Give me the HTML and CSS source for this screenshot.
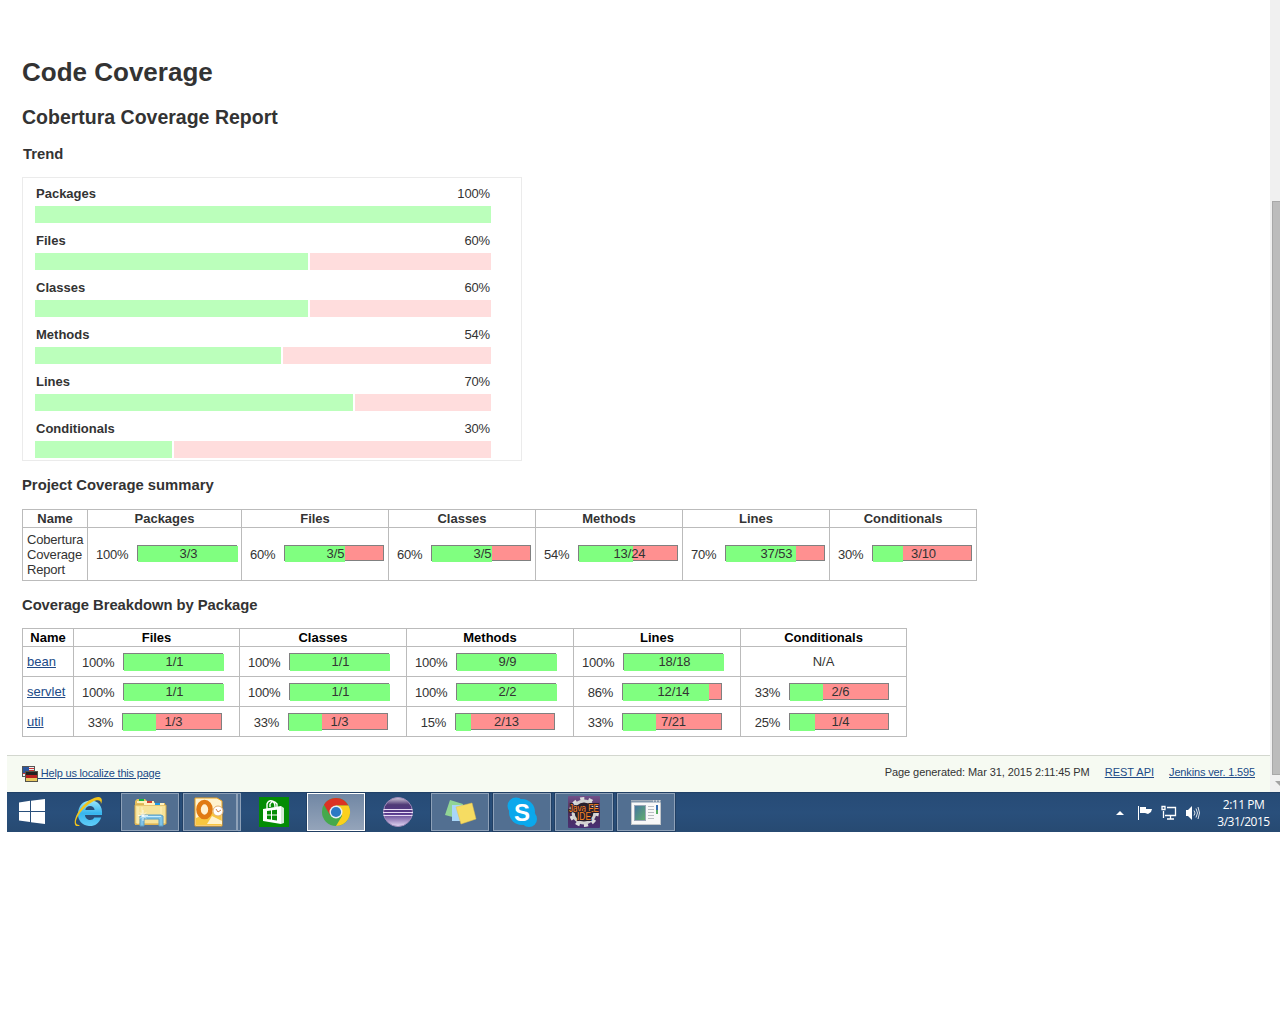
FILE: index.html
```html
<!DOCTYPE html>
<html lang="en">
<head>
<meta charset="utf-8">
<title>Code Coverage</title>
<link rel="stylesheet" href="styles.css">
</head>
<body>
<div class="screen">
  <div class="browser">
    <div class="page">
      <main class="report">
        <h1>Code Coverage</h1>
        <h2>Cobertura Coverage Report</h2>
        <h3 class="trend-title">Trend</h3>
        <section class="trend">
          <div class="metric"><div class="label"><b>Packages</b><span>100%</span></div><div class="track"><i class="hit" style="width:456px"></i></div></div>
          <div class="metric"><div class="label"><b>Files</b><span>60%</span></div><div class="track"><i class="hit" style="width:273px"></i><i class="miss"></i></div></div>
          <div class="metric"><div class="label"><b>Classes</b><span>60%</span></div><div class="track"><i class="hit" style="width:273px"></i><i class="miss"></i></div></div>
          <div class="metric"><div class="label"><b>Methods</b><span>54%</span></div><div class="track"><i class="hit" style="width:246px"></i><i class="miss"></i></div></div>
          <div class="metric"><div class="label"><b>Lines</b><span>70%</span></div><div class="track"><i class="hit" style="width:318px"></i><i class="miss"></i></div></div>
          <div class="metric"><div class="label"><b>Conditionals</b><span>30%</span></div><div class="track"><i class="hit" style="width:137px"></i><i class="miss"></i></div></div>
        </section>
        <h3 class="summary-title">Project Coverage summary</h3>
        <table class="grid summary">
          <colgroup><col class="s-name"><col class="s-pack"><col class="s-col"><col class="s-col"><col class="s-col"><col class="s-col"><col class="s-col"></colgroup>
          <tr><th>Name</th><th>Packages</th><th>Files</th><th>Classes</th><th>Methods</th><th>Lines</th><th>Conditionals</th></tr>
          <tr>
            <td class="name">Cobertura<br>Coverage<br>Report</td>
            <td><div class="ratio"><span class="pct full">100%</span><div class="bar"><i style="width:100px"></i><em>3/3</em></div></div></td>
            <td><div class="ratio"><span class="pct">60%</span><div class="bar"><i style="width:60px"></i><em>3/5</em></div></div></td>
            <td><div class="ratio"><span class="pct">60%</span><div class="bar"><i style="width:60px"></i><em>3/5</em></div></div></td>
            <td><div class="ratio"><span class="pct">54%</span><div class="bar"><i style="width:54px"></i><em>13/24</em></div></div></td>
            <td><div class="ratio"><span class="pct">70%</span><div class="bar"><i style="width:70px"></i><em>37/53</em></div></div></td>
            <td><div class="ratio"><span class="pct">30%</span><div class="bar"><i style="width:30px"></i><em>3/10</em></div></div></td>
          </tr>
        </table>
        <h3 class="packages-title">Coverage Breakdown by Package</h3>
        <table class="grid packages">
          <colgroup><col class="p-name"><col class="p-first"><col class="p-col"><col class="p-col"><col class="p-col"><col class="p-last"></colgroup>
          <tr><th>Name</th><th>Files</th><th>Classes</th><th>Methods</th><th>Lines</th><th>Conditionals</th></tr>
          <tr>
            <td class="name"><a href="#">bean</a></td>
            <td><div class="ratio"><span class="pct full">100%</span><div class="bar"><i style="width:100px"></i><em>1/1</em></div></div></td>
            <td><div class="ratio"><span class="pct full">100%</span><div class="bar"><i style="width:100px"></i><em>1/1</em></div></div></td>
            <td><div class="ratio"><span class="pct full">100%</span><div class="bar"><i style="width:100px"></i><em>9/9</em></div></div></td>
            <td><div class="ratio"><span class="pct full">100%</span><div class="bar"><i style="width:100px"></i><em>18/18</em></div></div></td>
            <td class="none">N/A</td>
          </tr>
          <tr>
            <td class="name"><a href="#">servlet</a></td>
            <td><div class="ratio"><span class="pct full">100%</span><div class="bar"><i style="width:100px"></i><em>1/1</em></div></div></td>
            <td><div class="ratio"><span class="pct full">100%</span><div class="bar"><i style="width:100px"></i><em>1/1</em></div></div></td>
            <td><div class="ratio"><span class="pct full">100%</span><div class="bar"><i style="width:100px"></i><em>2/2</em></div></div></td>
            <td><div class="ratio"><span class="pct">86%</span><div class="bar"><i style="width:86px"></i><em>12/14</em></div></div></td>
            <td><div class="ratio"><span class="pct">33%</span><div class="bar"><i style="width:33px"></i><em>2/6</em></div></div></td>
          </tr>
          <tr>
            <td class="name"><a href="#">util</a></td>
            <td><div class="ratio"><span class="pct">33%</span><div class="bar"><i style="width:33px"></i><em>1/3</em></div></div></td>
            <td><div class="ratio"><span class="pct">33%</span><div class="bar"><i style="width:33px"></i><em>1/3</em></div></div></td>
            <td><div class="ratio"><span class="pct">15%</span><div class="bar"><i style="width:15px"></i><em>2/13</em></div></div></td>
            <td><div class="ratio"><span class="pct">33%</span><div class="bar"><i style="width:33px"></i><em>7/21</em></div></div></td>
            <td><div class="ratio"><span class="pct">25%</span><div class="bar"><i style="width:25px"></i><em>1/4</em></div></div></td>
          </tr>
        </table>
      </main>
      <footer class="footer">
        <a class="localize" href="#"><svg width="16" height="16" viewBox="0 0 16 16"><rect x=".5" y=".5" width="12" height="10" fill="#eee" stroke="#555"/><path d="M7 2.500h5M7 4.500h5M1 7.500h3" stroke="#c33"/><rect x="1" y="1" width="6" height="6" fill="#2b569c"/><rect x="3.500" y="5.500" width="12" height="10" fill="#e8c860" stroke="#555349"/><rect x="4" y="6" width="11" height="4" fill="#222"/><rect x="4" y="9" width="11" height="3" fill="#b71f1f"/></svg><span>&nbsp;Help us localize this page</span></a>
        <div class="meta"><span class="made">Page generated: Mar 31, 2015 2:11:45 PM</span><a class="rest" href="#">REST API</a><a class="ver" href="#">Jenkins ver. 1.595</a></div>
      </footer>
    </div>
    <div class="scrollbar">
      <div class="thumb"></div>
      <svg class="down" width="10" height="17" viewBox="0 0 10 17"><path d="M5 6h10l-5 5z" fill="#a3a3a3"/></svg>
    </div>
  </div>
  <nav class="taskbar">
    <div class="start"><svg width="28" height="28" viewBox="0 0 28 28" fill="#fff"><path d="M1 4.500l11-1.700V13H1zM13 2.700L27 1v12H13zM1 14h11v10L1 22.500zM13 14h14v12l-14-1.700z"/></svg></div>
    <div class="slot"><svg width="32" height="32" viewBox="0 0 32 32">
      <defs><linearGradient id="ie" x1="0" y1="0" x2="0" y2="1"><stop offset="0" stop-color="#9be5fb"/><stop offset=".5" stop-color="#37b5ee"/><stop offset="1" stop-color="#61cdf8"/></linearGradient></defs>
      <path d="M30 19H13c.4 5.600 7.500 6.600 9.300 2.500h6.900C27 28 22 30.500 17 30c-7-.6-11.500-6-11-13C6.500 10 11 5 17.500 4.500 26 4 31 10 30 19zM13.300 14h9.300c-.4-5.500-8.600-5.500-9.300 0z" fill="url(#ie)"/>
      <path d="M8 29.500C0 33 1.500 21 9.500 11.500 16.500 3.500 26-1 29 2c1.400 1.600 1 4-.2 6.500 1-4.500-3.300-5.500-9-2.300C9.500 12 1.500 25 4.500 28c.8.8 2 .8 3.500 1.500z" fill="#f2c41c"/></svg></div>
    <div class="slot button"><svg width="36" height="34" viewBox="0 0 36 34">
      <path d="M3 6l2-2h8l2 2h6l2 2h10v22H3z" fill="#e3bd5e"/><path d="M3 10h31v19H3z" fill="#f6e39b" stroke="#d7aa47"/><path d="M5 7h17M12 9h20" stroke="#fff1be" stroke-width="2"/><path d="M6 12v17M10 12v17M29 12v17" stroke="#fff3bd"/>
      <rect x="7" y="4" width="5" height="2" fill="#12b53c"/><rect x="15" y="6" width="5" height="2" fill="#d24330"/><rect x="23" y="8" width="5" height="2" fill="#1c98e8"/>
      <path d="M8 31V21l2-1h19l2 1v10h-4v-7H12v7z" fill="#80c4e8" stroke="#5b9cc2"/><path d="M10 21.500h19" stroke="#c7edff"/><path d="M11 15v11M6 20.500h10M8 17.500l6 6M8 23.500l6-6" stroke="#fff" stroke-opacity=".7"/></svg></div>
    <div class="slot stacked"><div class="button"><svg width="32" height="32" viewBox="0 0 32 32">
      <path d="M2 2h22l5 3v25H2z" fill="#fff3cf" stroke="#eca21f"/><path d="M3 22l10-4 15-4v15H3z" fill="#f8c640"/><path d="M14 28l5-8 10 5v3z" fill="#fff2cd"/><ellipse cx="11.500" cy="13.500" rx="6" ry="7.500" fill="#fff1d0" stroke="#e07a12" stroke-width="4.600"/><circle cx="25" cy="15" r="5" fill="#fff" stroke="#e4b070"/><path d="M23 13l2 3 3-2" fill="none" stroke="#cf8650"/></svg></div><div class="edge"></div></div>
    <div class="slot"><svg width="30" height="30" viewBox="0 0 30 30"><rect width="30" height="30" fill="#048c04"/><path d="M4 12l18-3v18L4 24z" fill="#fff"/><path d="M22 9l3 2v15l-3 1z" fill="#d5ebd5"/><path d="M8 12V7q1-4 5-3 3 1 3 6M11 10V7q3-5 7 0v4" fill="none" stroke="#fff" stroke-width="1.400"/><path d="M8 14l4-.5v4H8zm5-.7l5-.6v4.800h-5zM8 18.500h4v4L8 22zm5 0h5v5l-5-.8z" fill="#048c04"/></svg></div>
    <div class="slot button active"><svg width="30" height="30" viewBox="0 0 30 30"><circle cx="15" cy="15" r="14" fill="#45a94c"/><path d="M3 7.800A14 14 0 0 1 27.300 8.500H15L9 18z" fill="#dc3223"/><path d="M15 8.500h12.500A14 14 0 0 1 15 29l6-10z" fill="#fbd01d"/><circle cx="15" cy="15" r="6.500" fill="#e9eff5"/><circle cx="15" cy="15" r="5.100" fill="#2b78c4"/></svg></div>
    <div class="slot"><svg width="32" height="32" viewBox="0 0 32 32"><defs><linearGradient id="ec" x1="0" y1="0" x2="0" y2="1"><stop offset="0" stop-color="#d3cbdc"/><stop offset=".25" stop-color="#4f3976"/><stop offset=".55" stop-color="#56388b"/><stop offset="1" stop-color="#e5d9f4"/></linearGradient></defs><circle cx="16" cy="16" r="14.500" fill="url(#ec)" stroke="#9c88b8"/><path d="M1.500 13.500h29M1 16.500h30M1.500 19.500h29" stroke="#e8ddf4"/></svg></div>
    <div class="slot button"><svg width="34" height="30" viewBox="0 0 34 30"><path d="M7 3l13 4-3 15-15-4z" fill="#91d595"/><path d="M9 8h14v16H9z" fill="#a8d6f9"/><path d="M13 10l16-4 4 16-15 5z" fill="#f6dc62" stroke="#e4c14c" stroke-width=".5"/></svg></div>
    <div class="slot button"><svg width="32" height="32" viewBox="0 0 32 32"><circle cx="16" cy="16" r="13" fill="#0ba8ec"/><circle cx="10" cy="10" r="8.500" fill="#0ba8ec"/><circle cx="23" cy="23" r="8" fill="#0ba8ec"/><text class="skype" x="16" y="24.500" text-anchor="middle">S</text></svg></div>
    <div class="slot button"><svg class="ide" width="32" height="32" viewBox="0 0 32 32"><defs><linearGradient id="jv" x1="0" y1="0" x2="0" y2="1"><stop offset="0" stop-color="#71518a"/><stop offset=".5" stop-color="#4a2b56"/><stop offset="1" stop-color="#493174"/></linearGradient></defs><rect width="32" height="32" rx="1" fill="url(#jv)"/><circle cx="16" cy="16" r="13" fill="none" stroke="#ddd" stroke-width="4" stroke-dasharray="4 4.168"/><circle cx="16" cy="16" r="11" fill="#29202c" stroke="#d2d2d2" stroke-width="3"/><g class="java"><text x="1" y="15.500" textLength="30" lengthAdjust="spacingAndGlyphs">Java EE</text><text x="9" y="24" textLength="14" lengthAdjust="spacingAndGlyphs">IDE</text></g></svg></div>
    <div class="slot button"><svg width="32" height="28" viewBox="0 0 32 28"><defs><linearGradient id="wn" x1="0" y1="0" x2="1" y2="1"><stop offset="0" stop-color="#4474a2"/><stop offset="1" stop-color="#63af6c"/></linearGradient></defs><rect x="1.500" y="2.500" width="29" height="24" fill="#f8f8f8" stroke="#c2c6ca"/><path d="M1 3.500h30" stroke="#8095aa" stroke-width="2"/><path d="M23 3h1m2 0h1m2 0h1" stroke="#fff"/><rect x="4.500" y="7.500" width="11" height="15" fill="url(#wn)" stroke="#9aa7b7"/><path d="M18 8.500h6M18 11.500h6M18 14.500h6M18 17.500h6M18 20.500h6" stroke="#b9bdc1"/><path d="M27 7v5" stroke="#346bae" stroke-width="2"/><path d="M27 12v4" stroke="#58ae62" stroke-width="2"/></svg></div>
    <div class="tray">
      <svg width="10" height="6" viewBox="0 0 10 6"><path d="M1 5l4-4 4 4z" fill="#fff"/></svg>
      <svg class="flag" width="16" height="16" viewBox="0 0 16 16"><path d="M1.500 1v14" stroke="#fff"/><path d="M3 2h6v2h6l-1 3-3 2-3-1H3z" fill="#fff"/></svg>
      <svg class="net" width="16" height="16" viewBox="0 0 16 16" fill="none" stroke="#fff"><path d="M6 2.500h8.500v8H4M9.500 11v3M6 14h7M2.500 6v7M1 1.500h3v3H1z" stroke-width="1.300"/></svg>
      <svg class="sound" width="16" height="16" viewBox="0 0 16 16"><path d="M1 5h2l4-4v14l-4-4H1z" fill="#fff"/><path d="M9 5.500q2 2.500 0 5M11 3.500q3 4.500 0 9M13 2q3 6 0 12" fill="none" stroke="#fff" stroke-opacity=".85"/></svg>
      <div class="clock"><span>2:11 PM</span><span>3/31/2015</span></div>
    </div>
  </nav>
</div>
</body>
</html>
```
FILE: styles.css
```css
* { box-sizing: border-box; }
body { margin: 0; background: #fff; color: #333; font: 13px/15px "Liberation Sans", Arial, sans-serif; }
.screen { width: 1280px; height: 1024px; overflow: hidden; padding-left: 7px; }
.browser { display: flex; height: 792px; }
.page { flex: 1; display: flex; flex-direction: column; }
.report { flex: 1; padding: 57px 0 0 15px; }
h1, h2, h3 { margin: 0; font-weight: bold; }
h1 { font-size: 26px; line-height: 30px; }
h2 { font-size: 19.5px; line-height: 24px; margin-top: 18px; }
h3 { font-size: 14.8px; line-height: 18px; }
.trend-title { margin: 16px 0 0 1px; }
.trend { width: 500px; height: 284px; margin-top: 14px; padding: 0 30px 0 12px; border: 1px solid #ebebeb; }
.metric { height: 47px; padding-top: 8px; }
.label { display: flex; justify-content: space-between; padding: 0 1px 5px; }
.label span { letter-spacing: -.15px; }
.track { display: flex; gap: 2px; height: 17px; }
.hit { background: #bfb; }
.miss { flex: 1; background: #fdd; }
.summary-title { margin-top: 15px; }
.packages-title { margin-top: 15px; letter-spacing: -.05px; }

.grid { table-layout: fixed; border-collapse: separate; border-spacing: 0; border: solid #bbb; border-width: 1px 0 0 1px; }
.grid th, .grid td { padding: 0; border: solid #bbb; border-width: 0 1px 1px 0; }
.grid th { height: 18px; }
.summary { width: 955px; margin-top: 15px; }
.summary td { height: 53px; }
.summary .name { letter-spacing: -.18px; }
.s-name { width: 65px; }
.s-pack { width: 154px; }
.s-col { width: 147px; }
.packages { width: 885px; margin-top: 14px; }
.packages th { color: #000; }
.packages td { height: 30px; }
.p-name { width: 51px; }
.p-first, .p-last { width: 166px; }
.p-col { width: 167px; }
.grid .name { padding-left: 4px; }
.grid .none { text-align: center; }
a { color: #204a87; text-decoration: underline; }
.ratio { display: flex; align-items: center; gap: 9px; padding-left: 8px; }
.pct { width: 25px; text-align: right; padding-top: 1px; white-space: nowrap; letter-spacing: -.25px; }
.pct.full { width: 32px; }
.packages .pct { width: 31px; }
.packages .pct.full { width: 32px; }
.bar { display: grid; width: 100px; height: 16px; border: 1px solid #808080; background: #ff9090; }
.packages .bar { height: 17px; }
.summary .bar { margin-bottom: 2px; }
.bar i, .bar em { grid-area: 1 / 1; }
.bar i { height: 16px; background: #80ff80; }
.packages .bar i { height: 17px; }
.bar em { width: 101px; text-align: center; font-style: normal; letter-spacing: -.1px; z-index: 1; }

.footer { display: flex; justify-content: space-between; height: 37px; padding: 10px 15px 0; border-top: 1px solid #d3d7cf; background: #f6faf2; font-size: 11px; line-height: 13px; }
.localize { display: flex; height: 17px; align-items: flex-start; letter-spacing: -.2px; }
.localize span { margin-top: 1px; }
.meta { display: flex; gap: 15px; }
.made { letter-spacing: -.07px; }
.ver { letter-spacing: -.15px; }

.scrollbar { display: flex; flex-direction: column; width: 10px; padding: 201px 0 0 2px; background: #f0f0f0; }
.thumb { height: 574px; border: 1px solid #a8a8a8; border-right: 0; background: #bcbcbc; }
.down { margin-left: -2px; }

.taskbar { display: flex; gap: 4px; height: 40px; border-top: 1px solid #1f4067; background: linear-gradient(#274b76, #294f7b 50%, #274a72); }
.start { display: flex; width: 48px; padding: 5px 0 0 11px; }
.slot { display: flex; align-items: center; justify-content: center; width: 58px; height: 38px; }
.button { border: 1px solid #8ea1b8; background: #526f91; outline: 1px solid #213f63; }
.active { border-color: #fff; background: linear-gradient(#7187a4, #94a4ba); }
.stacked { justify-content: flex-start; }
.stacked .button { display: flex; align-items: center; width: 54px; height: 38px; padding-left: 9px; }
.edge { width: 4px; height: 38px; border: 1px solid #8ea1b8; background: #526f91; }
.skype { font: bold 24px "Liberation Sans", Arial, sans-serif; fill: #fff; }
.ide { overflow: visible; }
.java { font: 11px "Liberation Sans", Arial, sans-serif; fill: #ff8420; stroke: #29202c; stroke-width: 2px; paint-order: stroke; }
.tray { display: flex; align-items: center; margin-left: auto; padding: 1px 10px 0 0; color: #fff; }
.flag { margin-left: 12px; }
.net { margin-left: 8px; }
.sound { margin-left: 8px; }
.clock { display: flex; flex-direction: column; align-items: center; width: 53px; margin-left: 16px; font: 12px/17px "Open Sans", "Noto Sans", sans-serif; letter-spacing: -.5px; white-space: nowrap; }
```
